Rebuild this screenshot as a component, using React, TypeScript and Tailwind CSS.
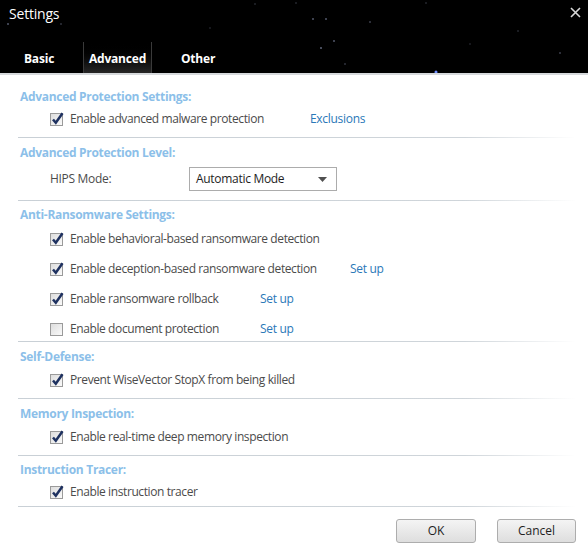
const font = { fontFamily: '"Open Sans", "Noto Sans", sans-serif' }

function Check({ on }: { on: boolean }) {
  return (
    <svg width="14" height="14" viewBox="0 0 14 14" className="shrink-0">
      <defs>
        <linearGradient id="cb" x1="0" y1="0" x2="1" y2="1">
          <stop offset="0" stopColor="#dcdcdc" />
          <stop offset="1" stopColor="#fbfbfb" />
        </linearGradient>
      </defs>
      <rect x="0.5" y="1.5" width="12" height="12" fill="url(#cb)" stroke="#9a9a9a" />
      {on && (
        <path d="M3 7.5 L5.8 10.8 L12.5 1.2" stroke="#1e3160" strokeWidth="2.5" fill="none" strokeLinejoin="miter" />
      )}
    </svg>
  )
}

function Line() {
  return <div className="ml-[18px] mr-[12px] h-px bg-gradient-to-r from-[#c9d0d6] via-[#cfd5da] via-80% to-white" />
}

function Heading({ children, mt }: { children: string; mt: string }) {
  return (
    <div className={`${mt} h-5 pl-5 flex items-center text-[12px] font-bold text-[#8cbfe9] tracking-[-0.3px]`}>
      {children}
    </div>
  )
}

function Row({ label, on = true, link, linkX }: { label: string; on?: boolean; link?: string; linkX?: string }) {
  return (
    <div className="h-6 pl-[50px] flex items-center text-[12px] text-[#4b4b4b]">
      <Check on={on} />
      <span className="ml-[6px] tracking-[-0.4px] whitespace-nowrap">{label}</span>
      {link && <span className={`absolute ${linkX} text-[#2a78b8] tracking-[-0.3px]`}>{link}</span>}
    </div>
  )
}

const stars = [
  [8, 24, 0.7], [61, 24, 0.4], [255, 4, 0.3], [296, 3, 0.3], [313, 19, 0.7], [326, 19, 0.7],
  [370, 22, 0.5], [334, 41, 0.7], [321, 48, 0.8], [345, 64, 0.4], [426, 3, 0.3],
  [560, 53, 0.5], [518, 31, 0.3], [210, 28, 0.25], [470, 44, 0.25],
]

export default function App() {
  return (
    <div className="w-[588px] h-[554px] bg-white relative overflow-hidden" style={font}>
      {/* header with starfield */}
      <div className="relative h-[73px] bg-black">
        <svg className="absolute inset-0" width="588" height="73">
          {stars.map(([x, y, o], i) => (
            <circle key={i} cx={x} cy={y} r="0.8" fill="#c8d4ff" opacity={o} />
          ))}
          <circle cx="436" cy="72" r="1.5" fill="#6f8dff" />
        </svg>
        <div className="absolute left-[9px] top-[3px] text-[14px] text-white tracking-[-0.2px]">Settings</div>
        <svg className="absolute left-[570px] top-[7px]" width="11" height="11" viewBox="0 0 11 11">
          <path d="M1 1 L10 10 M10 1 L1 10" stroke="#d8d8d8" strokeWidth="1.6" />
        </svg>
        <div className="absolute left-0 bottom-0 flex items-end h-[31px] text-[12px] font-bold text-white tracking-[-0.2px]">
          <div className="w-[83px] h-full flex items-center pl-[24px] pt-[2px]">Basic</div>
          <div className="w-[69px] h-full flex items-center justify-center pt-[2px] border-x border-[#3a3a3a] bg-gradient-to-b from-black to-[#262626]">
            Advanced
          </div>
          <div className="h-full flex items-center pl-[29px] pt-[2px]">Other</div>
        </div>
      </div>
      <div className="h-[2px] bg-[#d6d9dc]" />

      <div className="relative">
        <Heading mt="mt-[12px]">Advanced Protection Settings:</Heading>
        <div className="relative">
          <Row label="Enable advanced malware protection" link="Exclusions" linkX="left-[310px]" />
        </div>
        <div className="h-[6px]" />
        <Line />

        <Heading mt="mt-[5px]">Advanced Protection Level:</Heading>
        <div className="mt-[4px] h-6 pl-[50px] flex items-center text-[12px] text-[#4b4b4b]">
          <span className="w-[139px] tracking-[-0.3px]">HIPS Mode:</span>
          <div className="w-[148px] h-6 border border-[#acacac] flex items-center justify-between pl-[6px] pr-[9px] text-[#1e1e1e]">
            <span className="tracking-[-0.3px]">Automatic Mode</span>
            <svg width="9" height="5" viewBox="0 0 9 5">
              <path d="M0 0 L9 0 L4.5 5 Z" fill="#505050" />
            </svg>
          </div>
        </div>
        <div className="h-[9px]" />
        <Line />

        <Heading mt="mt-[4px]">Anti-Ransomware Settings:</Heading>
        <div className="relative mt-[2px] flex flex-col gap-[6px]">
          <Row label="Enable behavioral-based ransomware detection" />
          <Row label="Enable deception-based ransomware detection" link="Set up" linkX="left-[350px]" />
          <Row label="Enable ransomware rollback" link="Set up" linkX="left-[260px]" />
          <Row label="Enable document protection" on={false} link="Set up" linkX="left-[260px]" />
        </div>
        <Line />

        <Heading mt="mt-[5px]">Self-Defense:</Heading>
        <div className="mt-[1px]">
          <Row label="Prevent WiseVector StopX from being killed" />
        </div>
        <div className="h-[6px]" />
        <Line />

        <Heading mt="mt-[5px]">Memory Inspection:</Heading>
        <div className="mt-[1px]">
          <Row label="Enable real-time deep memory inspection" />
        </div>
        <div className="h-[6px]" />
        <Line />

        <Heading mt="mt-[4px]">Instruction Tracer:</Heading>
        <div>
          <Row label="Enable instruction tracer" />
        </div>
        <div className="h-[2px]" />
        <Line />

        <div className="mt-[12px] flex justify-end gap-[21px] pr-[12px] text-[12px] text-[#1e1e1e]">
          <button className="w-[80px] h-[24px] rounded-[3px] border border-[#adadad] bg-gradient-to-b from-[#f4f4f4] to-[#dedede]">
            OK
          </button>
          <button className="w-[79px] h-[24px] rounded-[3px] border border-[#adadad] bg-gradient-to-b from-[#f4f4f4] to-[#dedede]">
            Cancel
          </button>
        </div>
      </div>
    </div>
  )
}
